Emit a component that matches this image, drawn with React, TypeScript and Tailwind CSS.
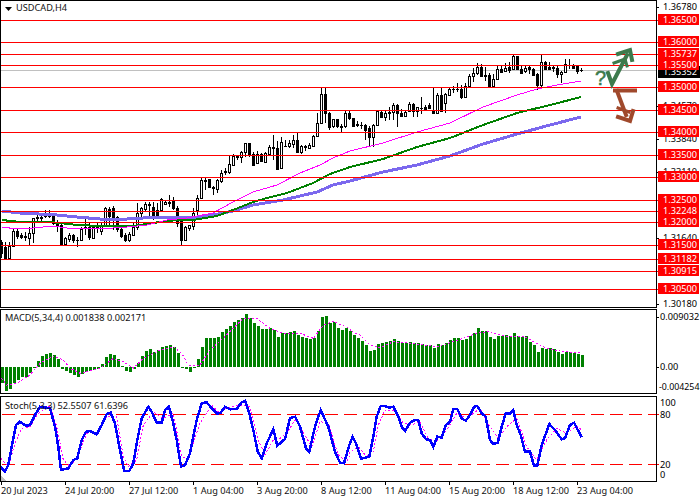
import type { ReactNode } from 'react';

// bars are [open, close, high, low] in page pixels, one every 4px
const candles: number[][] = [
  [242,253,240,258],[247,258,242,258],[258,246,242,259],[246,231,228,247],[231,236,228,239],[235,237,233,239],
  [236,237,232,241],[238,233,227,245],[233,218,218,243],[217,218,213,222],[218,217,213,222],[216,216,210,218],
  [216,216,210,218],[214,223,214,225],[222,225,220,232],[225,244,223,245],[244,238,237,245],[239,235,233,242],
  [235,240,234,243],[240,240,237,247],[240,229,227,240],[227,228,218,235],[227,237,222,240],[238,227,227,238],
  [227,227,222,233],[231,226,222,235],[226,208,207,227],[209,216,207,227],[208,217,206,230],[217,229,216,232],
  [229,236,227,238],[235,240,233,242],[240,234,232,242],[235,227,223,235],[227,213,203,230],[213,208,207,217],
  [209,204,202,212],[205,204,202,218],[207,217,202,220],[210,216,203,218],[210,199,198,210],[204,202,200,205],
  [202,203,195,207],[201,208,197,210],[208,223,206,227],[218,240,218,245],[240,227,226,240],[228,225,225,231],
  [226,213,208,230],[210,198,195,215],[198,180,178,199],[180,181,178,190],[179,187,179,187],[187,188,186,195],
  [189,180,179,193],[181,173,170,183],[171,172,168,175],[172,164,156,174],[165,156,154,166],[156,157,155,160],
  [157,152,151,163],[152,143,143,157],[143,155,143,157],[154,165,152,166],[163,154,151,164],[154,161,153,162],
  [162,153,152,163],[154,147,145,155],[147,148,135,160],[148,169,141,170],[168,142,137,169],[146,146,140,147],
  [146,143,140,148],[144,140,135,148],[140,152,133,153],[152,146,145,154],[146,147,145,151],[148,145,143,149],
  [146,136,135,146],[136,123,113,137],[123,94,87,123],[94,113,88,123],[113,127,112,130],[126,119,119,128],
  [119,126,119,128],[126,127,124,132],[126,113,110,128],[113,118,110,120],[118,126,118,127],[124,125,121,127],
  [125,125,122,129],[125,130,124,140],[128,137,126,147],[137,125,124,147],[125,111,110,125],[112,117,110,118],
  [117,113,111,121],[112,113,107,120],[112,105,103,120],[105,113,104,127],[113,116,109,117],[116,112,110,117],
  [111,104,102,111],[104,111,103,117],[111,107,107,117],[108,108,97,114],[107,109,105,110],[105,108,103,109],
  [110,113,87,114],[113,95,93,113],[95,111,87,112],[103,94,93,113],[95,89,88,95],[89,89,86,93],[89,89,83,92],
  [89,97,85,99],[97,86,83,98],[86,76,74,87],[76,73,68,82],[73,67,63,75],[67,76,64,76],[75,76,67,81],[75,86,73,88],
  [86,79,74,86],[79,69,66,80],[69,72,66,73],[71,68,63,72],[67,70,62,73],[69,56,55,70],[56,69,56,70],[69,73,66,74],
  [71,68,65,73],[67,69,65,74],[69,75,68,76],[74,85,73,90],[85,62,55,87],[62,69,61,70],[67,69,62,70],[68,67,66,72],
  [68,74,66,78],[74,72,71,83],[72,64,59,73],[65,65,59,69],[66,68,64,69],[66,71,65,74],[70,70,68,72],
];

const maSlow = '2,211 20,213 57,215 77,217 100,219 127,219 143,218 173,217 193,218 213,215 233,211 253,205 283,200 317,192 333,185 350,181 383,172 417,165 450,156 483,144 517,134 550,125 581,117';
const maMid = '2,220 20,222 50,222 77,225 100,226 133,226 160,222 177,220 193,220 217,216 233,210 253,202 267,198 287,193 313,183 330,174 350,167 383,159 417,147 450,138 483,125 517,113 550,105 581,97';
const maFast = '2,227 17,229 33,228 53,226 67,228 100,229 127,227 147,225 167,220 187,218 213,213 233,202 253,192 277,185 300,173 320,165 333,158 350,151 383,143 417,132 450,123 483,107 517,95 537,89 557,85 581,81';

const levels: [number, string][] = [
  [20, '1.36500'], [42, '1.36000'], [54, '1.35737'], [65, '1.35500'], [87, '1.35000'], [110, '1.34500'],
  [132, '1.34000'], [155, '1.33500'], [177, '1.33000'], [200, '1.32500'], [211, '1.32248'], [222, '1.32000'],
  [245, '1.31500'], [259, '1.31182'], [271, '1.30915'], [289, '1.30500'],
];
// the scale labels that still show around the red level boxes
const priceTicks: [number, string][] = [
  [7, '1.36780'], [106, '1.34570'], [139, '1.33840'], [172, '1.33110'], [238, '1.31640'], [304, '1.30180'],
];

// macd histogram, sampled off a 3x crop: page y = 270 + v / 3
const macd = [
  340,363,357,340,330,322,320,310,290,272,258,252,250,256,266,296,303,310,315,320,312,305,303,300,296,282,262,253,255,267,
  288,303,306,296,280,258,242,238,245,240,230,228,225,232,250,290,298,305,292,267,232,205,204,204,200,186,178,168,157,150,
  144,132,143,160,167,177,176,175,180,200,188,188,186,183,195,202,204,207,203,183,140,139,158,155,173,180,173,182,195,203,
  212,225,243,240,223,220,217,213,208,213,218,218,216,220,220,222,225,224,233,222,225,220,210,203,203,211,207,198,190,174,
  183,183,202,208,198,199,196,197,188,197,201,199,215,225,245,233,237,234,237,245,251,245,246,248,251,255,
];

// the line samples below come in two crops, left half and right half (3x)
const toPoints = (left: number[][], right: number[][]) =>
  [...left.map(([x, y]) => [x / 3, 270 + y / 3]), ...right.map(([x, y]) => [350 + x / 3, 270 + y / 3])]
    .map(([x, y]) => `${x.toFixed(1)},${y.toFixed(1)}`)
    .join(' ');

const macdSignal = toPoints(
  [[5,325],[20,345],[50,340],[90,315],[120,280],[160,258],[190,270],[210,295],[240,310],[300,295],[340,265],[370,275],[400,295],[430,265],[480,240],[520,230],[545,250],[565,285],[600,285],[630,240],[680,195],[730,145],[770,145],[810,175],[850,190],[900,190],[940,205],[970,165],[1000,155],[1050,175]],
  [[0,182],[30,195],[60,225],[90,233],[130,215],[200,222],[260,230],[320,212],[380,190],[420,185],[470,200],[520,198],[560,220],[590,235],[640,245],[692,248]],
);
const stochMain = toPoints(
  [[2,590],[15,605],[25,585],[35,530],[48,465],[60,455],[78,467],[90,465],[105,435],[120,410],[150,415],[165,470],[175,530],[183,600],[205,595],[220,570],[232,565],[245,510],[258,485],[270,483],[290,493],[305,465],[320,432],[332,428],[345,460],[360,540],[373,603],[388,603],[400,580],[412,510],[425,445],[445,410],[455,425],[470,458],[485,458],[495,420],[507,410],[520,460],[530,510],[543,590],[555,585],[570,550],[590,450],[605,400],[620,397],[635,415],[652,432],[662,428],[675,410],[690,418],[710,417],[725,397],[735,392],[748,430],[760,480],[773,545],[785,565],[800,520],[820,478],[832,527],[855,507],[870,445],[885,440],[900,470],[918,535],[928,545],[945,470],[962,420],[985,470],[1005,545],[1020,578],[1032,580],[1048,525]],
  [[0,520],[8,500],[18,520],[33,567],[45,563],[58,560],[70,500],[80,440],[92,408],[105,408],[118,413],[130,410],[145,440],[155,470],[165,483],[180,458],[195,450],[205,450],[215,490],[228,508],[240,510],[250,530],[262,500],[275,503],[288,465],[300,455],[310,417],[322,417],[335,445],[347,452],[360,435],[372,410],[382,408],[395,430],[407,440],[420,510],[430,522],[443,518],[455,470],[467,430],[480,430],[490,420],[500,465],[512,495],[525,545],[540,545],[552,587],[562,587],[575,525],[598,462],[615,480],[635,508],[645,505],[660,465],[672,458],[695,502]],
);
const stochSignal = toPoints(
  [[2,565],[25,590],[45,520],[65,475],[90,470],[115,430],[150,408],[170,470],[190,570],[210,590],[235,555],[260,490],[295,487],[320,440],[350,440],[370,560],[385,590],[410,570],[430,465],[460,425],[490,445],[520,430],[545,560],[565,565],[600,460],[635,405],[655,425],[680,415],[720,405],[750,410],[775,510],[795,555],[820,510],[840,505],[860,490],[885,450],[905,480],[935,530],[960,455],[985,460],[1015,555],[1040,575],[1048,560]],
  [[0,545],[25,530],[50,560],[70,545],[85,465],[105,420],[135,420],[160,460],[185,465],[210,455],[235,505],[260,515],[290,480],[320,430],[350,445],[390,415],[420,470],[445,505],[470,470],[500,445],[530,530],[560,570],[590,510],[620,475],[650,490],[680,468],[695,480]],
);

const dates = ['20 Jul 2023', '24 Jul 20:00', '27 Jul 12:00', '1 Aug 04:00', '3 Aug 20:00', '8 Aug 12:00', '11 Aug 04:00', '15 Aug 20:00', '18 Aug 12:00', '23 Aug 04:00'];

function AxisLabel({ y, text, className = '' }: { y: number; text: string; className?: string }) {
  return (
    <div className={`absolute h-[11px] leading-[11px] whitespace-nowrap ${className}`} style={{ top: y - 6 }}>
      {text}
    </div>
  );
}

function AxisTick({ y }: { y: number }) {
  return <div className="absolute left-0 h-px w-[2px] bg-black" style={{ top: y }} />;
}

// one chart pane: plot on the left, value scale on the right; svg coordinates are page pixels
function Pane({ top, height, title, titleTop, axis, children }: { top: number; height: number; title?: string; titleTop?: number; axis: ReactNode; children: ReactNode }) {
  return (
    <div className="flex shrink-0" style={{ height }}>
      <div className="relative w-[657px] shrink-0 border border-black">
        <svg className="block" width={655} height={height - 2} viewBox={`1 ${top + 1} 655 ${height - 2}`} shapeRendering="crispEdges" fill="none">
          {children}
        </svg>
        {title && (
          <div className="absolute left-[4px] leading-[12px] whitespace-pre text-[#111111]" style={{ top: titleTop }}>
            {title}
          </div>
        )}
      </div>
      <div className="relative flex-1">{axis}</div>
    </div>
  );
}

function PriceChart() {
  return (
    <>
      <line x1={1} x2={656} y1={70.5} y2={70.5} stroke="#c0c0c0" />
      {candles.map(([o, c, h, l], i) => {
        const x = 1.5 + i * 4;
        const up = c < o;
        const bodyTop = Math.min(o, c);
        return (
          <g key={i}>
            <line x1={x} x2={x} y1={h} y2={l} stroke="#000" />
            <rect x={x - 1} y={bodyTop + 0.5} width={2} height={Math.max(Math.abs(o - c), 0.01)} fill={up ? '#fff' : '#000'} stroke="#000" />
          </g>
        );
      })}
      <polyline points={maSlow} stroke="#7b68ee" strokeWidth={3} />
      <polyline points={maMid} stroke="#008000" strokeWidth={2} />
      <polyline points={maFast} stroke="#ff00ff" strokeWidth={1} />
      {levels.map(([y]) => (
        <line key={y} x1={1} x2={656} y1={y + 0.5} y2={y + 0.5} stroke="#ff0000" />
      ))}
      <g shapeRendering="auto" strokeLinecap="square">
        <text x={595} y={85} fill="#3d7a4c" stroke="#3d7a4c" strokeWidth={0.5} fontSize={20} fontFamily="Liberation Sans, sans-serif">?</text>
        <g stroke="#3d7a4c" strokeWidth={4}>
          <polyline points="608,73 612,84 627,55" />
          <polyline points="618,54 630,50 632,60" />
          <polyline points="614,63 625,59 627,66" strokeWidth={3} />
        </g>
        <g stroke="#a0492c" strokeWidth={4}>
          <polyline points="615,90.5 635,90.5" />
          <polyline points="617,91 626,115" />
          <polyline points="618,117 630,121 633,111" />
          <polyline points="618,108 629,112" strokeWidth={3} />
        </g>
      </g>
      <polygon points="5,7 12,7 8.5,11" fill="#000" shapeRendering="auto" />
    </>
  );
}

export default function App() {
  return (
    <div className="flex h-[500px] w-[700px] flex-col overflow-hidden bg-white font-['Noto_Sans',sans-serif] text-[9.2px] text-black">
      <Pane
        top={0}
        height={308}
        axis={
          <>
            {priceTicks.map(([y, t]) => (
              <div key={t}>
                <AxisTick y={y} />
                <AxisLabel y={y} text={t} className="left-[6px]" />
              </div>
            ))}
            <div className="absolute left-px top-[66px] h-[12px] w-[42px] bg-black pl-[5px] leading-[12px] text-white">1.35352</div>
            {levels.map(([y, t]) => (
              <div key={t}>
                <div className="absolute left-0 h-px w-[2px] bg-[#ff0000]" style={{ top: y }} />
                <AxisLabel y={y} text={t} className="left-px w-[41px] bg-[#ff0000] pl-[5px] text-white" />
              </div>
            ))}
          </>
        }
      >
        <PriceChart />
      </Pane>
      <div className="absolute left-[16px] top-[2px] leading-[12px] text-[#111111]">USDCAD,H4</div>

      <div className="mt-px">
        <Pane
          top={309}
          height={85}
          title="MACD(5,34,4) 0.001838 0.002171"
          titleTop={2}
          axis={
            <>
              <AxisTick y={8} />
              <AxisLabel y={8} text="0.009032" className="left-[3px]" />
              <AxisTick y={58} />
              <AxisLabel y={58} text="0.00" className="left-[3px]" />
              <AxisLabel y={79} text="-0.004254" className="left-[2px] text-[8.8px]" />
            </>
          }
        >
          {macd.map((v, i) => {
            const y = 270 + v / 3;
            const zero = 367;
            return <rect key={i} x={0.5 + i * 4} y={Math.min(y, zero)} width={3} height={Math.max(Math.abs(y - zero), 1)} fill="#008000" />;
          })}
          <polyline points={macdSignal} stroke="#ff00ff" strokeDasharray="2 2" />
        </Pane>
      </div>

      <div className="mt-[2px]">
        <Pane
          top={396}
          height={86}
          title="Stoch(5,3,3) 52.5507 61.6396"
          titleTop={3}
          axis={
            <>
              <AxisLabel y={7} text="100" className="left-[3px]" />
              <AxisLabel y={19} text="80" className="left-[3px]" />
              <AxisLabel y={69} text="20" className="left-[3px]" />
              <AxisLabel y={79} text="0" className="left-[3px]" />
              <div className="absolute left-0 top-[18px] h-px w-[2px] bg-[#ff0000]" />
              <div className="absolute left-0 top-[68px] h-px w-[2px] bg-[#ff0000]" />
            </>
          }
        >
          <line x1={2} x2={656} y1={414.5} y2={414.5} stroke="#ff0000" strokeDasharray="13 6" />
          <line x1={2} x2={656} y1={464.5} y2={464.5} stroke="#ff0000" strokeDasharray="13 6" />
          <polyline points={stochSignal} stroke="#ff00ff" strokeDasharray="2 2" />
          <polyline points={stochMain} stroke="#0000ff" strokeWidth={2.5} />
          <polygon points="1,476 7,481 1,481" fill="#c0c0c0" />
        </Pane>
      </div>

      <div className="flex pl-px">
        {dates.map(d => (
          <div key={d} className="w-[64px] shrink-0">
            <div className="h-[3px] w-px bg-black" />
            <div className="leading-[12px] whitespace-nowrap text-[#111111]">{d}</div>
          </div>
        ))}
      </div>
    </div>
  );
}
